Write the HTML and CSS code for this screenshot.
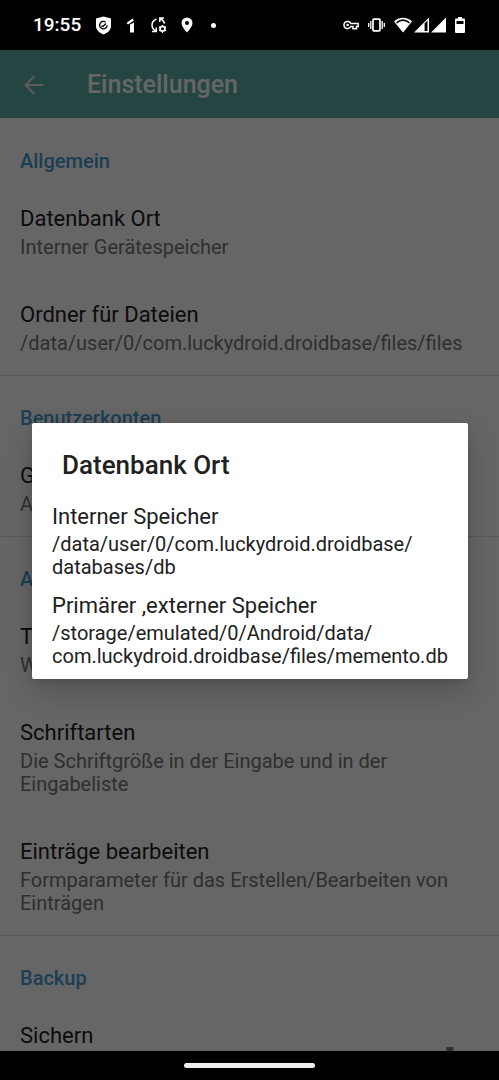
FILE: index.html
```html
<!DOCTYPE html>
<html lang="de">
<head>
<meta charset="utf-8">
<meta name="viewport" content="width=device-width, initial-scale=1">
<title>Einstellungen</title>
<link rel="stylesheet" href="styles.css">
</head>
<body>
<div class="statusbar">
  <div class="status-left">
    <span class="clock">19:55</span>
    <svg width="17" height="19" viewBox="0 0 17 19"><path d="M8.500 0.500L16 2.500V10C16 14 12.500 17 8.500 18.500C4.500 17 1 14 1 10V2.500Z" fill="#fff"/><path d="M6.300 9.800L8 10.500L11 7.500M10.600 6A3.800 3.800 0 1 0 12.200 9.200" fill="none" stroke="#000" stroke-width="1.300"/></svg>
    <svg width="9" height="15" viewBox="0 0 9 15"><path d="M0.500 5L6.500 0.500L8 2.500L2 6.500ZM4 6.500L8 4.500V14.500H4Z" fill="#fff"/></svg>
    <svg class="sync" width="16" height="16" viewBox="0 0 16 16"><g fill="none" stroke="#fff" stroke-width="1.500"><path d="M5.500 2C2.500 3.200 1 5.500 1 8C1 10.500 2.200 12.500 4.600 14M1 14.500H5.300V10.500M13.500 6.500C13 4.500 11.500 2.600 9 1.500M13 1H8.800V5"/><circle cx="11.500" cy="11.800" r="2.400" stroke-width="1.800"/><path d="M11.500 8V9M11.500 14.600V16M8 9.800L9.200 10.500M15 9.800L13.800 10.500M8 13.800L9.200 13.100M15 13.800L13.800 13.100" stroke-width="1.200"/></g></svg>
    <svg width="12" height="16" viewBox="0 0 12 16"><path fill="#fff" fill-rule="evenodd" d="M6 0.500A5.500 5.500 0 0 0 0.500 6C0.500 10 6 15.500 6 15.500S11.500 10 11.500 6A5.500 5.500 0 0 0 6 0.500ZM6 4A2 2 0 1 1 6 8A2 2 0 1 1 6 4Z"/></svg>
    <span class="dot"></span>
  </div>
  <div class="status-right">
    <svg width="16" height="10" viewBox="0 0 16 10"><path d="M7.800 3.500A3.600 3.600 0 1 0 7.800 6.500H10V8.800H13.500V6.500H15.200V3.500Z" fill="none" stroke="#fff" stroke-width="1.500"/><circle cx="4.600" cy="5" r="1.300" fill="#fff"/></svg>
    <svg width="17" height="14" viewBox="0 0 17 14"><rect x="5" y="1.200" width="7" height="11.600" rx="0.800" fill="none" stroke="#fff" stroke-width="1.700"/><path d="M2.800 3V11M14.200 3V11M0.700 5V9M16.300 5V9" stroke="#fff" stroke-width="1.300"/></svg>
    <div class="signals">
      <svg width="18" height="16" viewBox="0 0 18 16"><path d="M0 4.500C5 -0.500 13 -0.500 18 4.500L9 15.500Z" fill="#fff"/><path d="M2.500 5.800C6.500 2.500 11.500 2.500 15.500 5.800" fill="none" stroke="#000" stroke-width="1.500"/></svg>
      <svg width="15" height="16" viewBox="0 0 15 16"><path d="M0 15.500L15 0.500V15.500Z" fill="#fff"/><path d="M10.600 6.500L13.500 3.600V14H10.600Z" fill="#000"/></svg>
      <svg width="15" height="16" viewBox="0 0 15 16"><path d="M0 15.500L15 0.500V15.500Z" fill="#fff"/></svg>
    </div>
    <svg width="10" height="16" viewBox="0 0 10 16"><path d="M3 0H7V1.500H9Q10 1.500 10 2.500V15Q10 16 9 16H1Q0 16 0 15V2.500Q0 1.500 1 1.500H3Z" fill="#fff"/><path d="M1.500 4H8.500V7H1.500Z" fill="#000"/></svg>
  </div>
</div>

<div class="window">
  <header class="appbar">
    <button class="back" type="button" aria-label="Zurück"><svg width="20" height="20" viewBox="0 0 20 20"><path d="M19.500 10H2M10.500 1L1.500 10L10.500 19" fill="none" stroke="currentColor" stroke-width="2"/></svg></button>
    <h1>Einstellungen</h1>
  </header>
  <main class="settings">
    <section>
      <h2>Allgemein</h2>
      <button class="pref" type="button"><span class="name">Datenbank Ort</span><span class="summary">Interner Gerätespeicher</span></button>
      <button class="pref" type="button"><span class="name">Ordner für Dateien</span><span class="summary">/data/user/0/com.luckydroid.droidbase/files/files</span></button>
    </section>
    <section>
      <h2>Benutzerkonten</h2>
      <button class="pref" type="button"><span class="name">G</span><span class="summary">A</span></button>
    </section>
    <section>
      <h2>A</h2>
      <button class="pref" type="button"><span class="name">T</span><span class="summary">W</span></button>
      <button class="pref" type="button"><span class="name">Schriftarten</span><span class="summary">Die Schriftgröße in der Eingabe und in der Eingabeliste</span></button>
      <button class="pref" type="button"><span class="name">Einträge bearbeiten</span><span class="summary">Formparameter für das Erstellen/Bearbeiten von Einträgen</span></button>
    </section>
    <section>
      <h2>Backup</h2>
      <div class="pref-row">
        <button class="pref" type="button"><span class="name">Sichern</span></button>
        <button class="gear" type="button" aria-label="Optionen"><svg width="26" height="26" viewBox="0 0 26 26"><circle cx="13" cy="13" r="7" fill="none" stroke="currentColor" stroke-width="5"/><path d="M13 0V5M13 21V26M1.700 6.500L6 9M20 17L24.300 19.500M1.700 19.500L6 17M20 9L24.300 6.500" stroke="currentColor" stroke-width="7"/></svg></button>
      </div>
    </section>
  </main>
  <div class="scrim">
    <div class="dialog" role="dialog" aria-modal="true" aria-labelledby="dialog-title">
      <h2 id="dialog-title">Datenbank Ort</h2>
      <button class="option" type="button"><span class="name">Interner Speicher</span><span class="path">/data/user/0/com.luckydroid.droidbase/<wbr>databases/db</span></button>
      <button class="option" type="button"><span class="name">Primärer ,externer Speicher</span><span class="path">/storage/emulated/0/Android/data/<wbr>com.luckydroid.droidbase/files/memento.db</span></button>
    </div>
  </div>
</div>
<div class="navbar"><span class="handle"></span></div>
</body>
</html>
```
FILE: styles.css
```css
* { box-sizing: border-box; }

body {
  margin: 0;
  height: 100vh;
  display: flex;
  flex-direction: column;
  overflow: hidden;
  background: #000;
  font-family: Roboto, "Noto Sans", sans-serif;
  color: #212121;
}

button {
  border: 0;
  padding: 0;
  background: none;
  font: inherit;
  color: inherit;
  text-align: left;
}

svg { display: block; flex: none; }
h1, h2 { margin: 0; font-weight: 500; }

.statusbar {
  flex: none;
  height: 50px;
  padding: 0 34px 0 33px;
  display: flex;
  align-items: center;
  justify-content: space-between;
  color: #fff;
}

.status-left, .status-right { display: flex; align-items: center; }
.status-left { gap: 14px; }
.status-right { gap: 9px; }
.signals { display: flex; gap: 2px; }
.clock { font-size: 19px; line-height: 24px; font-weight: 500; }
.sync { margin-left: 2px; }
.dot { width: 5px; height: 5px; margin-left: 4px; border-radius: 50%; background: #fff; }

.window {
  position: relative;
  flex: 1;
  min-height: 0;
  overflow: hidden;
  display: flex;
  flex-direction: column;
  background: #fff;
}

.appbar {
  flex: none;
  height: 68px;
  padding: 2px 24px 0;
  display: flex;
  align-items: center;
  gap: 43px;
  background: #5aaca6;
  color: #fff;
}

.appbar h1 { font-size: 25px; line-height: 32px; }
.back { color: #e4e4e4; }

.settings { flex: 1; min-height: 0; overflow: hidden; }
.settings section + section { border-top: 1px solid #dedede; }

.settings h2 {
  padding: 32px 20px 10px;
  font-size: 20px;
  line-height: 23px;
  color: #479bd0;
}

.settings section + section h2 { padding-top: 31px; }

.pref {
  display: flex;
  flex-direction: column;
  gap: 2px;
  width: 100%;
  padding: 20px;
}

.name { font-size: 22px; line-height: 31px; }
.pref .summary { font-size: 20px; line-height: 23px; color: #757575; }
.pref-row { display: flex; align-items: flex-start; }
.pref-row .pref { flex: 1; }
.gear { padding: 47px 36px 0 0; color: #757575; }

.scrim {
  position: absolute;
  inset: 0;
  display: flex;
  align-items: center;
  padding: 0 32px;
  background: rgba(0, 0, 0, 0.6);
}

.dialog {
  flex: 1;
  padding: 24px 0 4px;
  border-radius: 2px;
  background: #fff;
  box-shadow: 0 12px 30px rgba(0, 0, 0, 0.2), 0 2px 6px rgba(0, 0, 0, 0.1);
}

.dialog h2 {
  padding: 0 30px 14px;
  font-size: 26px;
  line-height: 36px;
}

.option {
  display: flex;
  flex-direction: column;
  gap: 2px;
  width: 100%;
  padding: 6px 20px 7px;
}

.option .name { line-height: 28px; }
.option .path { font-size: 20px; line-height: 23px; }

.navbar {
  flex: none;
  height: 29px;
  display: flex;
  align-items: center;
  justify-content: center;
}

.handle { width: 131px; height: 5px; border-radius: 3px; background: #eee; }
```
